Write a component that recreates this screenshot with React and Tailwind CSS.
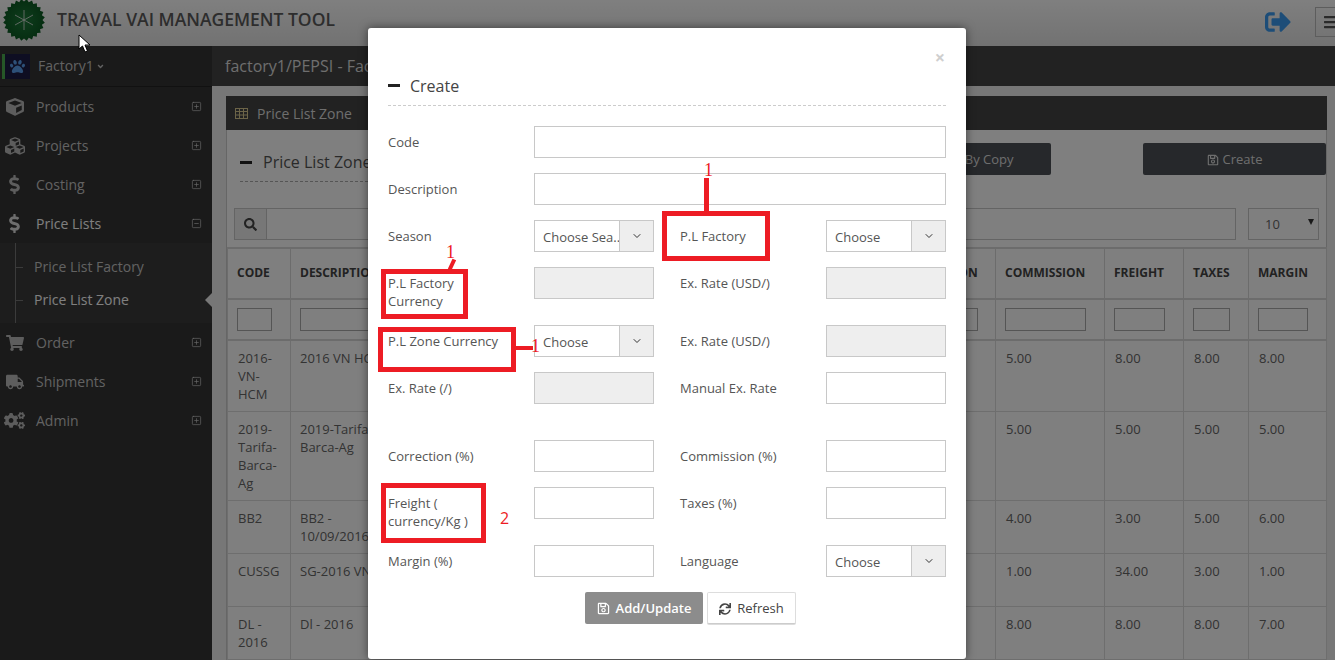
import {
  FaCube, FaCubes, FaDollarSign, FaShoppingCart, FaTruck, FaCogs, FaSearch,
  FaSignOutAlt, FaBars, FaRegSave, FaSync, FaAngleDown, FaPaw,
} from "react-icons/fa";
import { SquarePlus, SquareMinus, ChevronDown } from "lucide-react";

const font = { fontFamily: '"Open Sans", sans-serif' };

function Logo() {
  const pts = [];
  for (let i = 0; i < 48; i++) {
    const r = i % 2 ? 21 : 18.5;
    const a = (i / 48) * Math.PI * 2;
    pts.push(`${22 + r * Math.cos(a)},${22 + r * Math.sin(a)}`);
  }
  return (
    <svg width="44" height="44" viewBox="0 0 44 44" className="-mt-[2px] shrink-0 self-start">
      <defs>
        <radialGradient id="lg" cx="50%" cy="50%" r="50%">
          <stop offset="0%" stopColor="#1d7a3a" />
          <stop offset="100%" stopColor="#0b5a22" />
        </radialGradient>
      </defs>
      <polygon points={pts.join(" ")} fill="url(#lg)" />
      <g stroke="#e8e8e8" strokeWidth="0.8">
        <line x1="22" y1="12" x2="22" y2="32" />
        <line x1="13" y1="17" x2="31" y2="27" />
        <line x1="13" y1="27" x2="31" y2="17" />
      </g>
    </svg>
  );
}

function GridIcon() {
  return (
    <svg width="13" height="11" viewBox="0 0 13 11" fill="none" stroke="#d8c890" strokeWidth="1" className="mr-[9px]">
      <rect x="0.5" y="0.5" width="12" height="10" />
      <path d="M0.5 3.5H12.5M0.5 7H12.5M4.5 0.5V10.5M8.5 0.5V10.5" />
    </svg>
  );
}

function NavItem({ icon: Icon, label, size = 18, open, active }) {
  const Sign = open ? SquareMinus : SquarePlus;
  return (
    <div className="flex h-[39px] items-center pr-[10px]">
      <span className={active ? "flex w-[36px] justify-center pr-[7px] text-[#dddddd]" : "flex w-[36px] justify-center pr-[7px] text-[#bbbbbb]"}>
        <Icon size={size} />
      </span>
      <span className={active ? "flex-1 text-[14px] font-medium text-white" : "flex-1 text-[14px] text-[#c4c4c4]"}>
        {label}
      </span>
      <Sign size={11} strokeWidth={1.5} className="text-[#cccccc]" />
    </div>
  );
}

function Sidebar() {
  return (
    <aside className="w-[212px] shrink-0 bg-[#343434]">
      <div className="flex h-[41px] items-center border-b border-[#222222] pl-[2px]">
        <div className="flex h-[25px] w-[28px] items-center justify-center border-l-[3px] border-[#4caf50] bg-[#1c1c44] text-[#5aa0f0]">
          <FaPaw size={15} />
        </div>
        <span className="mb-[2px] ml-[8px] text-[14px] text-[#c4c4c4]">Factory1</span>
        <FaAngleDown size={9} className="ml-[2px] text-[#c4c4c4]" />
      </div>
      <NavItem icon={FaCube} label="Products" />
      <NavItem icon={FaCubes} label="Projects" size={20} />
      <NavItem icon={FaDollarSign} label="Costing" size={19} />
      <NavItem icon={FaDollarSign} label="Price Lists" size={19} open active />
      <div className="relative h-[80px] bg-[#3a3a3a] pl-[34px] pt-[14px] text-[14px]">
        <div className="absolute left-[15px] top-0 h-full w-px bg-[#777777]" />
        <div className="absolute left-[15px] top-[24px] h-px w-[8px] bg-[#777777]" />
        <div className="absolute left-[15px] top-[57px] h-px w-[8px] bg-[#777777]" />
        <div className="h-[33px] leading-[20px] text-[#c4c4c4]">Price List Factory</div>
        <div className="font-medium leading-[20px] text-white">Price List Zone</div>
        <div className="absolute right-0 top-[50px] h-0 w-0 border-y-[7px] border-r-[7px] border-y-transparent border-r-[#eeeeee]" />
      </div>
      <NavItem icon={FaShoppingCart} label="Order" />
      <NavItem icon={FaTruck} label="Shipments" />
      <NavItem icon={FaCogs} label="Admin" size={21} />
    </aside>
  );
}

const cols = [63, 120, 120, 120, 240, 105, 109, 79, 65, 78];
// the middle columns sit behind the modal, their titles can't be read
const heads = ["Code", "Description", "", "", "", "Correction", "Commission", "Freight", "Taxes", "Margin"];
const filters = [35, 100, 80, 80, 160, 78, 81, 51, 37, 50];
const rows = [
  ["2016-VN-HCM", "2016 VN HCM", "5.00", "8.00", "8.00", "8.00"],
  ["2019-Tarifa-Barca-Ag", "2019-Tarifa-Barca-Ag", "5.00", "5.00", "5.00", "5.00"],
  ["BB2", "BB2 - 10/09/2016", "4.00", "3.00", "5.00", "6.00"],
  ["CUSSG", "SG-2016 VN", "1.00", "34.00", "3.00", "1.00"],
  ["DL - 2016", "Dl - 2016", "8.00", "8.00", "8.00", "7.00"],
];

function PriceTable() {
  return (
    <table className="w-[1099px] table-fixed border-collapse text-[13px] leading-[18px] text-[#666666]">
      <colgroup>
        {cols.map((w, i) => (
          <col key={i} style={{ width: w }} />
        ))}
      </colgroup>
      <thead>
        <tr className="h-[51px] border-y-2 border-[#d8d8d8]">
          {heads.map((h, i) => (
            <th key={i} className="overflow-hidden border-x border-[#d8d8d8] px-[9px] pb-[2px] text-left text-[12px] font-bold whitespace-nowrap text-[#444444] uppercase">
              {h}
            </th>
          ))}
        </tr>
        <tr className="h-[41px] border-b-2 border-[#d8d8d8]">
          {filters.map((w, i) => (
            <th key={i} className="border-x border-[#d8d8d8] px-[9px] align-middle">
              <input className="block h-[23px] border border-[#aaaaaa] bg-white" style={{ width: w }} />
            </th>
          ))}
        </tr>
      </thead>
      <tbody>
        {rows.map((r) => (
          <tr key={r[0]} className="border-b border-[#dddddd]">
            <td className="h-[53px] border-x border-[#dddddd] py-[8px] pl-[10px] pr-[10px] align-top">{r[0]}</td>
            <td className="border-x border-[#dddddd] py-[8px] pl-[9px] pr-[9px] align-top">{r[1]}</td>
            <td className="border-x border-[#dddddd]" />
            <td className="border-x border-[#dddddd]" />
            <td className="border-x border-[#dddddd]" />
            <td className="border-x border-[#dddddd]" />
            {r.slice(2).map((v, i) => (
              <td key={i} className="border-x border-[#dddddd] py-[8px] pl-[10px] align-top">{v}</td>
            ))}
          </tr>
        ))}
      </tbody>
    </table>
  );
}

function Page() {
  return (
    <div className="flex h-[660px] flex-col">
      <header className="flex h-[46px] shrink-0 items-center bg-gradient-to-b from-[#ffffff] to-[#e4e4e4] pl-[2px]">
        <Logo />
        <div className="mb-[8px] ml-[11px] flex-1 text-[17.5px] font-semibold text-[#5a5a5a]">TRAVAL VAI MANAGEMENT TOOL</div>
        <FaSignOutAlt size={26} className="mb-[2px] text-[#3a9bf0]" />
        <div className="mb-[3px] ml-[24px] -mr-[4px] flex h-[30px] w-[24px] shrink-0 items-center border border-[#bbbbbb] pl-[7px] text-[#555555]">
          <FaBars size={16} className="shrink-0" />
        </div>
      </header>
      <div className="flex flex-1 overflow-hidden">
        <Sidebar />
        <main className="flex-1 bg-[#eeeeee]">
          <div className="flex h-[40px] items-center bg-[#444444] pl-[13px] text-[16px] text-[#dddddd]">
            factory1/PEPSI - Factory
          </div>
          <div className="ml-[14px] mt-[10px] w-[1101px]">
            <div className="flex h-[34px] items-center bg-[#444444] pl-[9px] text-[14px] text-[#dddddd]">
              <GridIcon />
              Price List Zone
            </div>
            <div className="border-x border-[#cccccc] bg-white">
              <div className="flex pt-[13px] pl-[13px]">
                <div className="h-[39px] w-[628px] border-b border-dashed border-[#aaaaaa] pt-[7px]">
                  <div className="flex items-center text-[16px] text-[#555555]">
                    <div className="mr-[11px] h-[3px] w-[12px] bg-[#222222]" />
                    Price List Zone
                  </div>
                </div>
                <button className="flex h-[32px] w-[183px] items-center justify-center gap-[4px] rounded-[2px] bg-[#4c5056] pt-px text-[13px] text-[#dddddd]">
                  <FaRegSave size={12} />
                  Create By Copy
                </button>
                <button className="ml-[92px] flex h-[32px] w-[183px] items-center justify-center gap-[4px] rounded-[2px] bg-[#4c5056] pt-px text-[13px] text-[#dddddd]">
                  <FaRegSave size={12} />
                  Create
                </button>
              </div>
              <div className="mt-[26px] flex pl-[7px]">
                <div className="flex h-[32px] flex-1 border border-[#c8c8c8]">
                  <div className="flex w-[32px] items-center justify-center border-r border-[#c8c8c8] bg-[#eeeeee] text-[#444444]">
                    <FaSearch size={13} />
                  </div>
                </div>
                <div className="relative ml-[12px] mr-[7px] flex h-[32px] w-[71px] items-center border border-[#c8c8c8] pl-[16px] pt-[2px] text-[13px] text-[#666666]">
                  10
                  <div className="absolute right-[4px] top-[10px] h-0 w-0 border-x-[3.5px] border-t-[6px] border-x-transparent border-t-[#333333]" />
                </div>
              </div>
              <div className="mt-[7px]">
                <PriceTable />
              </div>
            </div>
          </div>
        </main>
      </div>
    </div>
  );
}

function Label({ children }) {
  return <div className="w-[146px] shrink-0 pr-[24px] pt-[7px] text-[13px] leading-[18px] text-[#555555]">{children}</div>;
}

function TextBox({ disabled, wide }) {
  return (
    <div
      className={
        (wide ? "w-[412px] " : "w-[120px] ") +
        (disabled ? "bg-[#eeeeee] " : "bg-white ") +
        "h-[32px] shrink-0 border border-[#c8c8c8]"
      }
    />
  );
}

function SelectBox({ text }) {
  return (
    <div className="flex h-[32px] w-[120px] shrink-0 border border-[#c8c8c8] bg-white">
      <div className="flex-1 overflow-hidden pl-[8px] pt-[7px] text-[13px] leading-[18px] whitespace-nowrap text-[#555555]">{text}</div>
      <div className="flex w-[34px] shrink-0 items-center justify-center border-l border-[#c8c8c8] bg-[#eeeeee] text-[#333333]">
        <ChevronDown size={12} strokeWidth={2} />
      </div>
    </div>
  );
}

function Row({ className = "mb-[15px]", children }) {
  return <div className={"flex " + className}>{children}</div>;
}

function Gap() {
  return <div className="w-[26px] shrink-0" />;
}

function Modal() {
  return (
    <div className="absolute left-[368px] top-[28px] h-[631px] w-[598px] rounded-[3px] bg-white px-[20px] pt-[19px] shadow-[0_0_10px_rgba(0,0,0,0.5)]" style={font}>
      <div className="flex h-[20px] items-center justify-end pr-[1px] text-[18px] font-bold leading-none text-[#cfcfcf]">×</div>
      <div className="mt-[8px] flex h-[31px] items-start border-b border-dashed border-[#cccccc] text-[16px] leading-[22px] text-[#444444]">
        <div className="mr-[10px] mt-[9px] h-[3px] w-[12px] bg-[#222222]" />
        Create
      </div>
      <div className="mt-[20px]">
        <Row><Label>Code</Label><TextBox wide /></Row>
        <Row><Label>Description</Label><TextBox wide /></Row>
        <Row><Label>Season</Label><SelectBox text="Choose Sea.." /><Gap /><Label>P.L Factory</Label><SelectBox text="Choose" /></Row>
        <Row><Label>P.L Factory Currency</Label><TextBox disabled /><Gap /><Label>Ex. Rate (USD/)</Label><TextBox disabled /></Row>
        <Row><Label>P.L Zone Currency</Label><SelectBox text="Choose" /><Gap /><Label>Ex. Rate (USD/)</Label><TextBox disabled /></Row>
        <Row className="mb-[36px]"><Label>Ex. Rate (/)</Label><TextBox disabled /><Gap /><Label>Manual Ex. Rate</Label><TextBox /></Row>
        <Row><Label>Correction (%)</Label><TextBox /><Gap /><Label>Commission (%)</Label><TextBox /></Row>
        <Row><Label>Freight ( currency/Kg )</Label><TextBox /><Gap /><Label>Taxes (%)</Label><TextBox /></Row>
        <Row><Label>Margin (%)</Label><TextBox /><Gap /><Label>Language</Label><SelectBox text="Choose" /></Row>
      </div>
      <div className="flex pl-[197px]">
        <button className="flex h-[32px] w-[118px] items-center justify-center gap-[6px] rounded-[2px] bg-[#8c8c8c] pt-px text-[13px] font-semibold text-white">
          <FaRegSave size={13} />
          Add/Update
        </button>
        <button className="ml-[4px] flex h-[32px] w-[89px] items-center justify-center gap-[6px] rounded-[2px] border border-[#dddddd] border-b-[#cccccc] bg-white pt-px text-[13px] text-[#444444] shadow-[0_1px_0_#dddddd]">
          <FaSync size={12} />
          Refresh
        </button>
      </div>
    </div>
  );
}

// red marks someone painted over the screenshot
function Annotations() {
  return (
    <>
      <div className="absolute left-[662px] top-[211px] h-[50px] w-[108px] border-[5px] border-[#ed1c24]" />
      <div className="absolute left-[704px] top-[178px] h-[34px] w-[5px] bg-[#ed1c24]" />
      <div className="absolute left-[704px] top-[159px] text-[18px] leading-[22px] text-[#ed1c24]" style={{ fontFamily: '"Liberation Serif", serif' }}>1</div>

      <div className="absolute left-[381px] top-[269px] h-[50px] w-[87px] border-[5px] border-[#ed1c24]" />
      <div className="absolute left-[450px] top-[259px] h-[11px] w-[4px] rotate-[25deg] bg-[#ed1c24]" />
      <div className="absolute left-[446px] top-[241px] text-[18px] leading-[22px] text-[#ed1c24]" style={{ fontFamily: '"Liberation Serif", serif' }}>1</div>

      <div className="absolute left-[378px] top-[327px] h-[45px] w-[138px] border-[5px] border-[#ed1c24]" />
      <div className="absolute left-[516px] top-[346px] h-[4px] w-[17px] bg-[#ed1c24]" />
      <div className="absolute left-[531px] top-[335px] text-[18px] leading-[22px] text-[#ed1c24]" style={{ fontFamily: '"Liberation Serif", serif' }}>1</div>

      <div className="absolute left-[381px] top-[483px] h-[60px] w-[105px] border-[5px] border-[#ed1c24]" />
      <div className="absolute left-[500px] top-[507px] text-[16px] leading-[22px] text-[#ed1c24]" style={font}>2</div>
    </>
  );
}

export default function App() {
  return (
    <div className="relative h-[660px] w-[1335px] overflow-hidden" style={font}>
      <Page />
      <div className="absolute inset-0 bg-black/50" />
      <Modal />
      <Annotations />
      <svg className="absolute left-[78px] top-[34px]" width="14" height="20" viewBox="0 0 14 20">
        <path d="M1 1 L1 15 L4.5 12 L7 18 L9.5 17 L7 11 L12 11 Z" fill="#ffffff" stroke="#000000" strokeWidth="1" />
      </svg>
    </div>
  );
}
